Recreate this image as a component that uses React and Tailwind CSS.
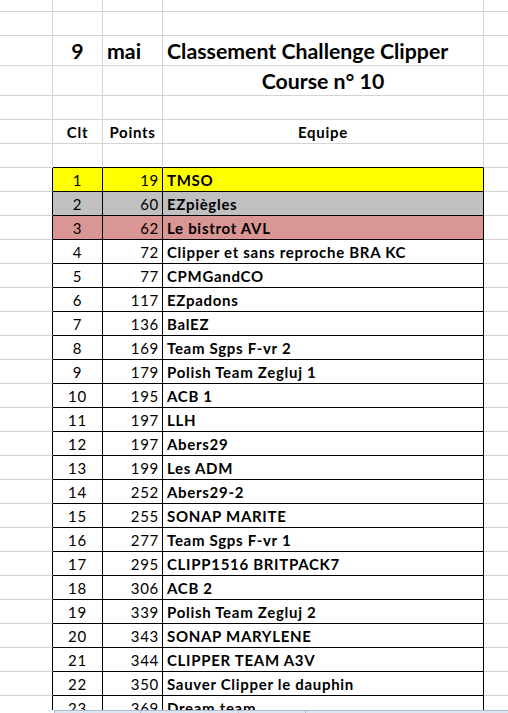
import React from "react";

const teams = [
    [1, 19, "TMSO", "bg-[#ffff00]"],
    [2, 60, "EZpiègles", "bg-[#c0c0c0]"],
    [3, 62, "Le bistrot AVL", "bg-[#da9694]"],
    [4, 72, "Clipper et sans reproche BRA KC"],
    [5, 77, "CPMGandCO"],
    [6, 117, "EZpadons"],
    [7, 136, "BalEZ"],
    [8, 169, "Team Sgps F-vr 2"],
    [9, 179, "Polish Team Zegluj 1"],
    [10, 195, "ACB 1"],
    [11, 197, "LLH"],
    [12, 197, "Abers29"],
    [13, 199, "Les ADM"],
    [14, 252, "Abers29-2"],
    [15, 255, "SONAP MARITE"],
    [16, 277, "Team Sgps F-vr 1"],
    [17, 295, "CLIPP1516 BRITPACK7"],
    [18, 306, "ACB 2"],
    [19, 339, "Polish Team Zegluj 2"],
    [20, 343, "SONAP MARYLENE"],
    [21, 344, "CLIPPER TEAM A3V"],
    [22, 350, "Sauver Clipper le dauphin"],
    [23, 369, "Dream team"],
];

// blank row of gridlines, optional content per column
function GridRow({h, b, c, d, last}) {
    return (
        <div className={`flex shrink-0 ${h}`}>
            <div className="w-[53px] shrink-0 border-r border-b border-[#d4d4d4]"/>
            <div className={`w-[50px] shrink-0 border-r border-[#d4d4d4] ${last ? "border-b border-b-black" : "border-b"}`}>{b}</div>
            <div className={`w-[60px] shrink-0 border-r border-[#d4d4d4] ${last ? "border-b border-b-black" : "border-b"}`}>{c}</div>
            <div className={`w-[321px] shrink-0 border-r border-[#d4d4d4] ${last ? "border-b border-b-black" : "border-b"}`}>{d}</div>
            <div className="flex-1 border-b border-[#d4d4d4]"/>
        </div>
    );
}

function TeamRow({rank, points, name, bg}) {
    const fill = bg ? bg : "bg-white";
    return (
        <div className="flex shrink-0 h-[24px] text-[15px] leading-[18px] tracking-[0.7px]">
            <div className="w-[53px] shrink-0 border-r border-r-black border-b border-b-[#d4d4d4]"/>
            <div className={`w-[50px] shrink-0 flex items-end justify-center pb-[2px] border-r border-b border-black ${fill}`}>
                {rank}
            </div>
            <div className={`w-[60px] shrink-0 flex items-end justify-end pr-[3px] pb-[2px] border-r border-b border-black ${fill}`}>
                {points}
            </div>
            <div className={`w-[321px] shrink-0 flex items-end pl-[4px] pb-[2px] font-bold whitespace-nowrap border-r border-b border-black ${fill}`}>
                {name}
            </div>
            <div className="flex-1 border-b border-[#d4d4d4]"/>
        </div>
    );
}

export default function App() {
    const head = "h-full flex items-end justify-center pb-[2px] text-[15px] leading-[18px] tracking-[0.7px] font-bold";
    const title = "h-full flex items-end pb-[1px] text-[21.3px] leading-[26px] font-bold whitespace-nowrap";
    return (
        <div className="h-[713px] w-[508px] overflow-hidden bg-white text-black flex flex-col"
             style={{fontFamily: "Lato, 'Liberation Sans', sans-serif"}}>
            <div className="flex-1 overflow-hidden flex flex-col">
                <GridRow h="h-[12px]"/>
                <GridRow h="h-[24px]"/>
                <GridRow h="h-[30px]"
                         b={<div className={`${title} justify-center`}>9</div>}
                         c={<div className={`${title} pl-[4px]`}>mai</div>}
                         d={<div className={`${title} pl-[4px]`}>Classement Challenge Clipper</div>}/>
                <GridRow h="h-[30px]"
                         d={<div className={`${title} justify-center`}>Course n° 10</div>}/>
                <GridRow h="h-[24px]"/>
                <GridRow h="h-[24px]"
                         b={<div className={head}>Clt</div>}
                         c={<div className={head}>Points</div>}
                         d={<div className={head}>Equipe</div>}/>
                <GridRow h="h-[24px]" last/>
                {teams.map(([rank, points, name, bg]) => (
                    <TeamRow key={rank} rank={rank} points={points} name={name} bg={bg}/>
                ))}
            </div>
            <div className="h-[3px] shrink-0 flex">
                <div className="w-[54px] shrink-0 bg-white"/>
                <div className="flex-1 flex bg-[#dfe7f1] border-t border-l border-[#a9bcd3]">
                    <div className="w-[86px] border-r border-[#a9bcd3]"/>
                    <div className="w-[98px] border-r border-[#a9bcd3]"/>
                    <div className="w-[67px] border-r border-[#a9bcd3]"/>
                </div>
            </div>
        </div>
    );
}
